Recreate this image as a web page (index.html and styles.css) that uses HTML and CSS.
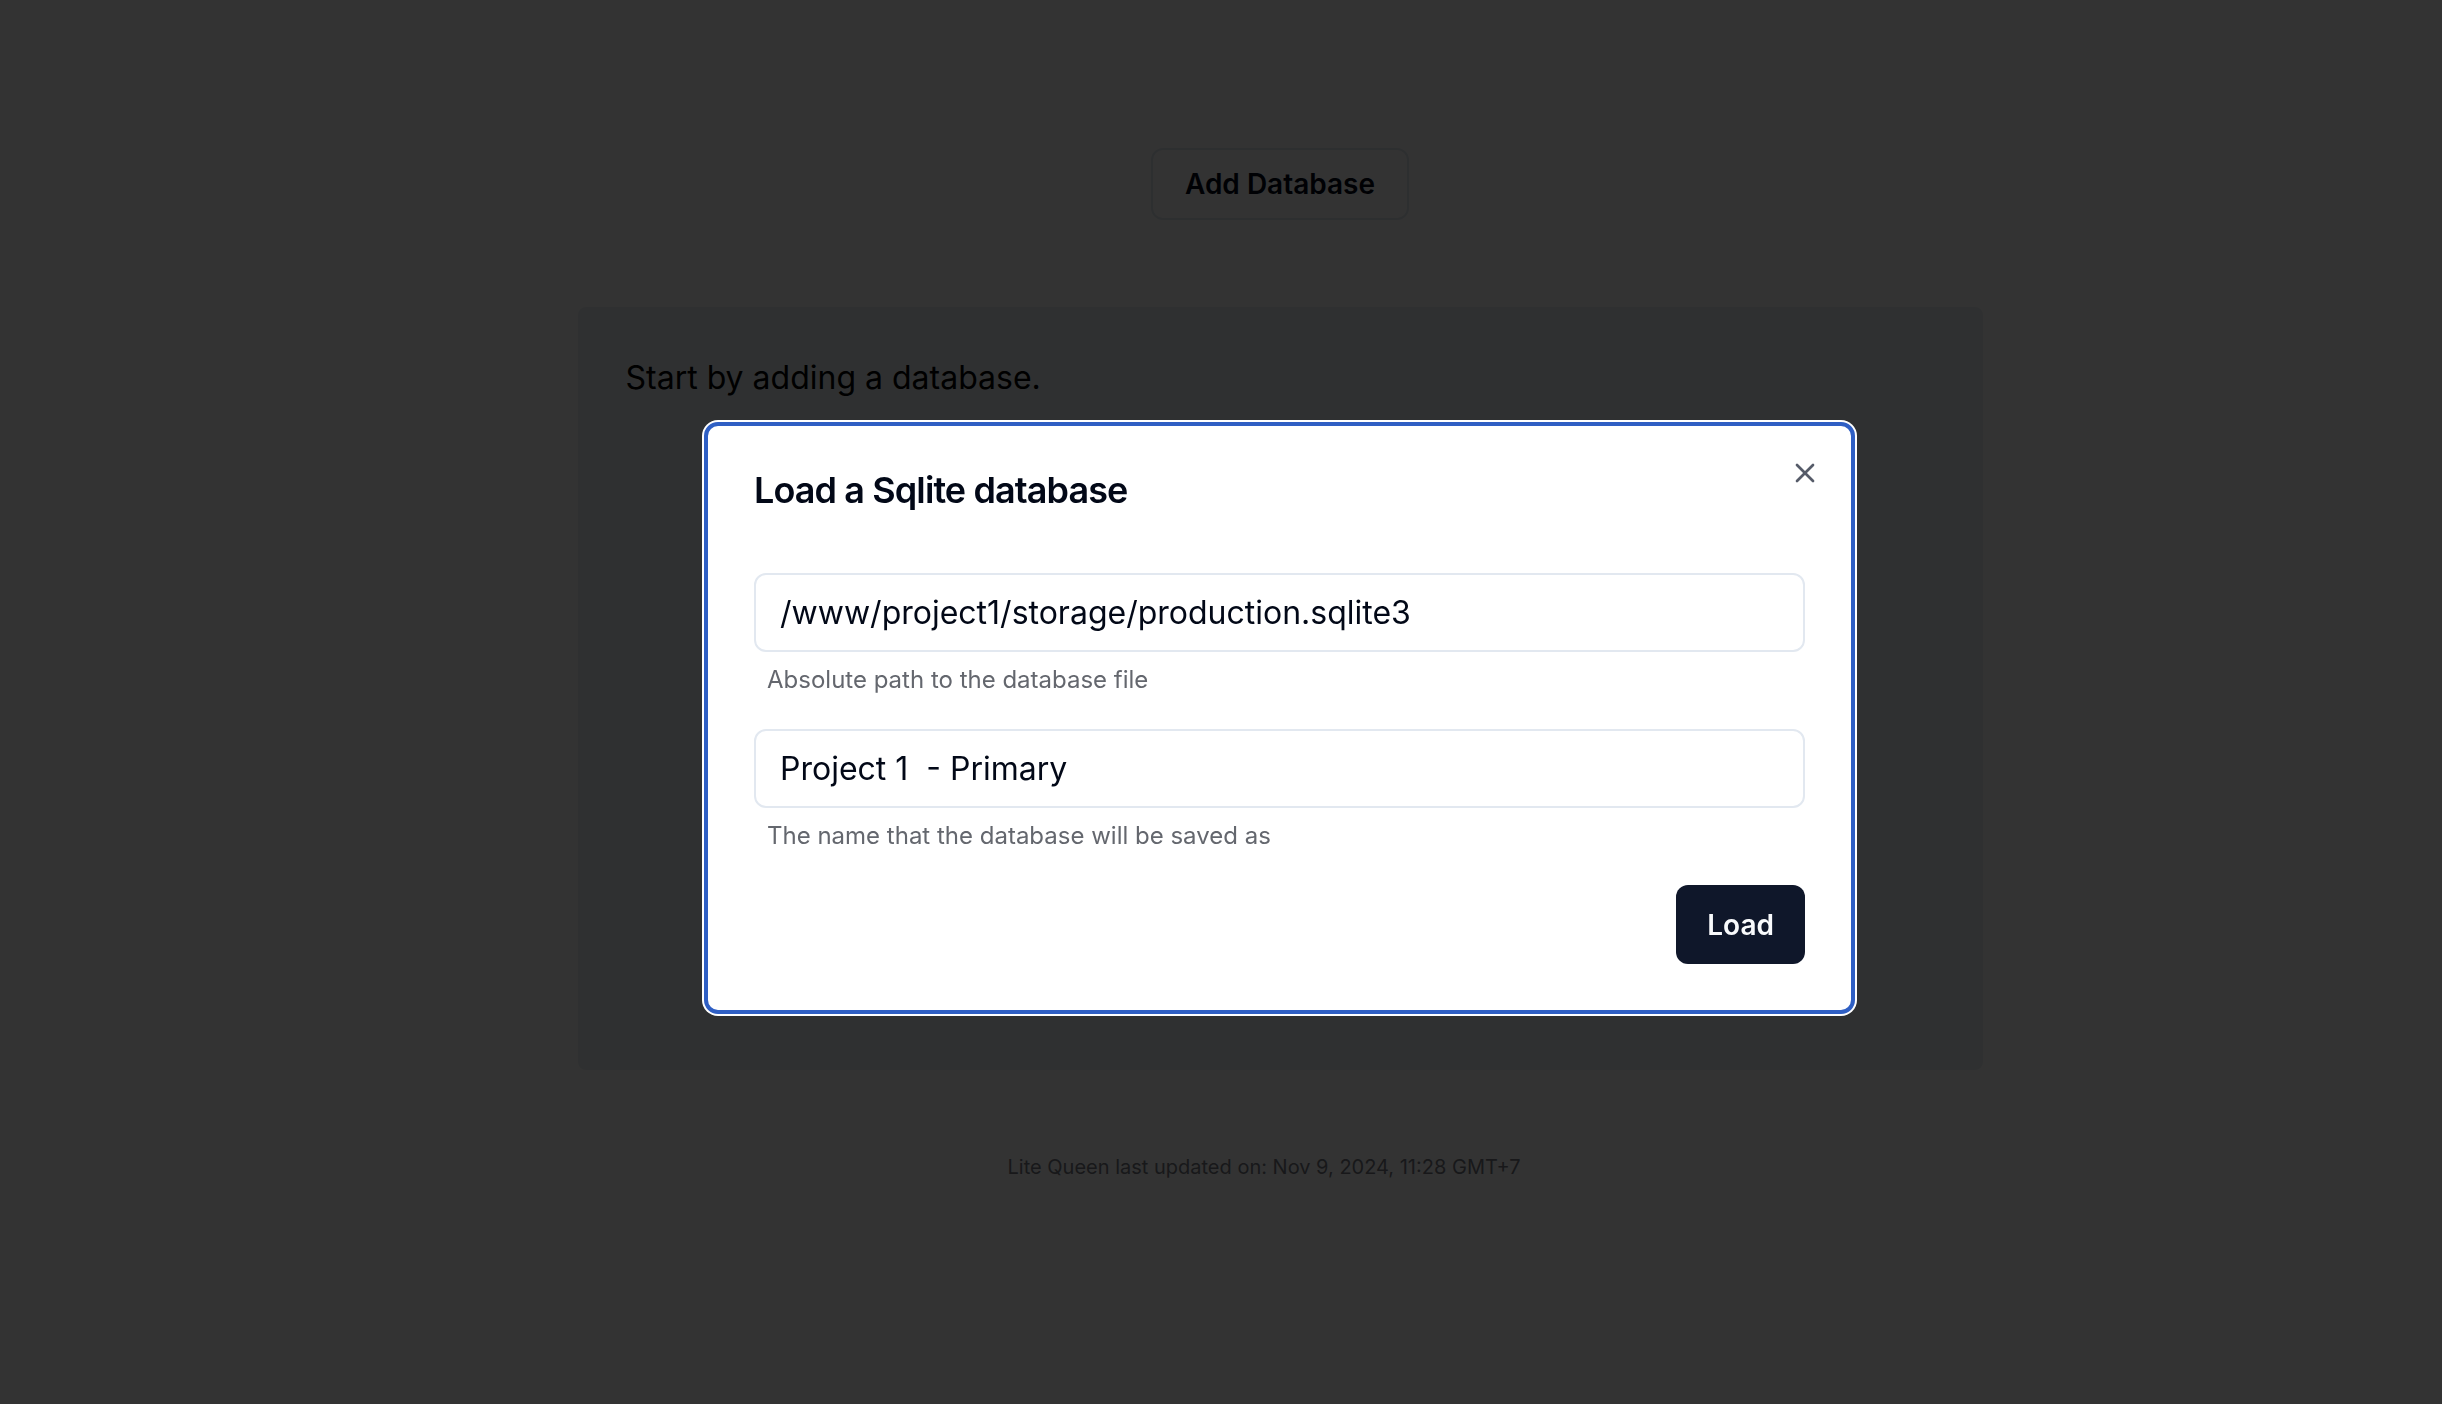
FILE: index.html
```html
<!DOCTYPE html>
<html lang="en">
<head>
<meta charset="utf-8">
<title>Lite Queen</title>
<link rel="stylesheet" href="styles.css">
</head>
<body>
<main class="page">
  <div class="toolbar">
    <button class="btn-outline" type="button">Add Database</button>
  </div>
  <section class="card">
    <p class="empty">Start by adding a database.</p>
  </section>
  <footer class="footer">Lite Queen last updated on: Nov 9, 2024, 11:28 GMT+7</footer>
</main>

<div class="overlay"></div>

<div class="modal" role="dialog" aria-labelledby="dlg-title">
  <h2 class="modal-title" id="dlg-title">Load a Sqlite database</h2>
  <button class="close" type="button" aria-label="Close">
    <svg viewBox="0 0 24 24" width="32" height="32" fill="none" stroke="currentColor" stroke-width="2" stroke-linecap="round" stroke-linejoin="round"><path d="M18 6 6 18"/><path d="m6 6 12 12"/></svg>
  </button>
  <form class="form">
    <div class="field">
      <input class="input" type="text" value="/www/project1/storage/production.sqlite3">
      <p class="desc">Absolute path to the database file</p>
    </div>
    <div class="field">
      <input class="input" type="text" value="Project 1  - Primary">
      <p class="desc">The name that the database will be saved as</p>
    </div>
    <div class="actions">
      <button class="btn-primary" type="button">Load</button>
    </div>
  </form>
</div>
</body>
</html>
```

FILE: styles.css
```css
* { box-sizing: border-box; }

html, body {
  margin: 0;
  height: 100%;
}

body {
  background: #ffffff;
  font-family: Inter, "Noto Sans", "Liberation Sans", sans-serif;
  color: #020817;
  overflow: hidden;
}

.page {
  display: flex;
  flex-direction: column;
  align-items: center;
  padding: 148px 0 0 118px;
}

.toolbar {
  display: flex;
  justify-content: center;
}

.btn-outline {
  height: 72px;
  padding: 0 32px;
  border: 2px solid #e2e8f0;
  border-radius: 12px;
  background: #ffffff;
  color: #020817;
  font-family: inherit;
  font-size: 28px;
  font-weight: 600;
}

.card {
  width: 1405px;
  min-height: 763px;
  margin-top: 87px;
  padding: 47px 48px;
  background: #ecf0f4;
  border-radius: 8px;
}

.empty {
  margin: 0;
  font-size: 32px;
  line-height: 48px;
  color: #000000;
}

.footer {
  margin-top: 83px;
  padding-right: 32px;
  font-size: 20px;
  line-height: 28px;
  color: #777b84;
}

.overlay {
  position: fixed;
  inset: 0;
  background: rgba(0, 0, 0, 0.8);
}

.modal {
  position: absolute;
  left: 704px;
  top: 422px;
  width: 1151px;
  display: flex;
  flex-direction: column;
  padding: 46px;
  background: #ffffff;
  border: 4px solid #2f5fc4;
  border-radius: 14px;
  box-shadow: 0 0 0 2px #ffffff;
}

.modal-title {
  margin: 0;
  font-size: 36px;
  line-height: 36px;
  font-weight: 600;
  letter-spacing: -0.9px;
  color: #020817;
}

.close {
  position: absolute;
  right: 30px;
  top: 31px;
  width: 32px;
  height: 32px;
  padding: 0;
  border: 0;
  background: transparent;
  color: #0f172a;
  opacity: 0.7;
}

.close svg { display: block; }

.form {
  display: flex;
  flex-direction: column;
  gap: 33px;
  margin-top: 65px;
}

.field {
  display: flex;
  flex-direction: column;
}

.input {
  width: 100%;
  height: 79px;
  padding: 0 24px;
  border: 2px solid #e2e8f0;
  border-radius: 12px;
  background: #ffffff;
  font-family: Inter, "Noto Sans", sans-serif;
  font-size: 32px;
  color: #020817;
  outline: none;
}

.desc {
  margin: 12px 0 0;
  padding-left: 13px;
  font-size: 24px;
  line-height: 32px;
  color: #64676e;
}

.actions {
  display: flex;
  justify-content: flex-end;
}

.btn-primary {
  height: 79px;
  padding: 0 31px;
  border: 0;
  border-radius: 12px;
  background: #0f172a;
  color: #f8fafc;
  font-family: inherit;
  font-size: 28px;
  font-weight: 600;
}
```
